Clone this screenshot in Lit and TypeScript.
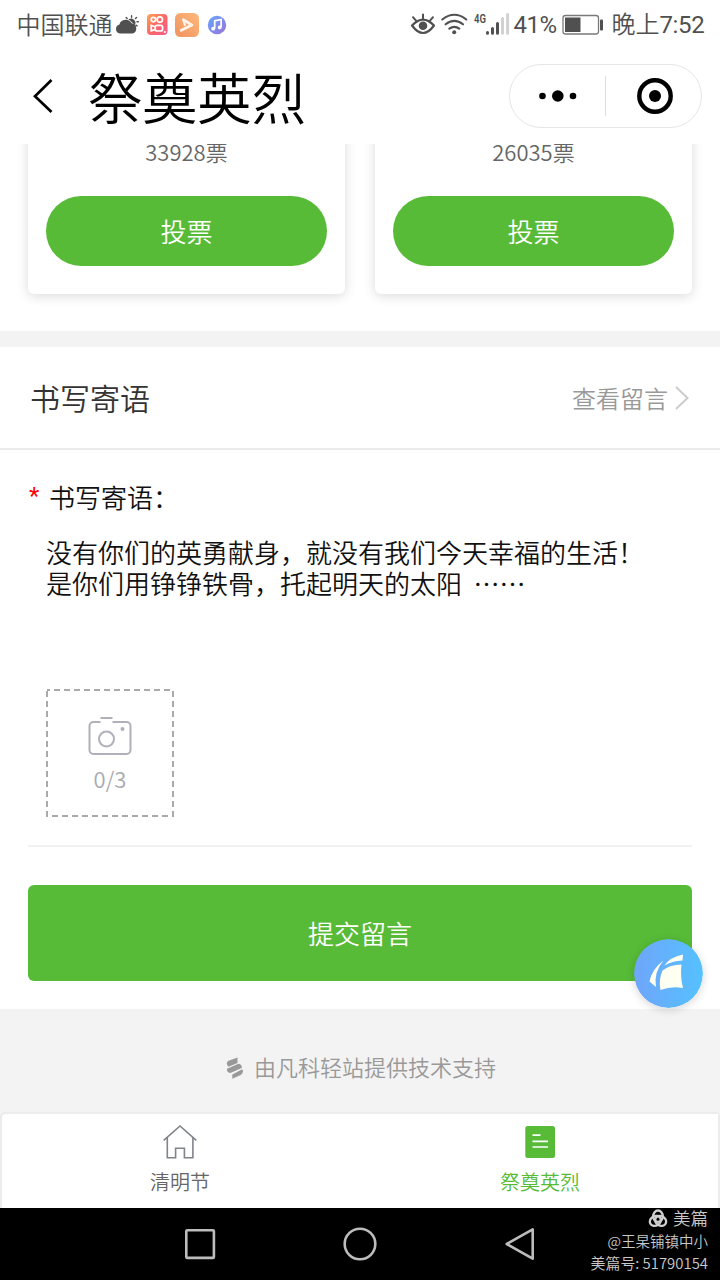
import { LitElement, html, css, svg } from "lit";
import { customElement, property } from "lit/decorators.js";

@customElement("status-bar")
class StatusBar extends LitElement {
  static styles = css`
    :host {
      display: flex;
      height: 48px;
      box-sizing: border-box;
      padding: 0 15.5px 0 16.5px;
      align-items: center;
      font-size: 24px;
      line-height: 48px;
      color: #505050;
    }
    .carrier { width: 95.5px; white-space: nowrap; }
    .spacer { flex: 1; }
    .num { font-family: Roboto, sans-serif; font-weight: 400; letter-spacing: -0.3px; padding-top: 2px; }
    .time { margin-left: 7px; white-space: nowrap; }
    svg { display: block; flex: none; margin-top: 2px; }
    .signal { margin-right: 0.5px; }
    .pct { margin-left: 3px; width: 43px; white-space: nowrap; letter-spacing: -0.4px; }
    .battery { margin-left: 6px; }
  `;
  render() {
    return html`
      <span class="carrier">中国联通</span>
      <svg width="120" height="30" viewBox="112 10 120 30">
        <defs>
          <linearGradient id="k" x1="0" y1="0" x2="1" y2="1">
            <stop offset="0" stop-color="#ffa552" /><stop offset=".5" stop-color="#fa6868" /><stop offset="1" stop-color="#f45a8f" />
          </linearGradient>
          <linearGradient id="v" x1="1" y1="0" x2="0" y2="1">
            <stop offset="0" stop-color="#ffb87c" /><stop offset="1" stop-color="#ee925f" />
          </linearGradient>
          <linearGradient id="m" x1="0" y1="0" x2="1" y2="1">
            <stop offset="0" stop-color="#65a4ff" /><stop offset="1" stop-color="#9a75db" />
          </linearGradient>
        </defs>
        <path d="M120 33.5a4.6 4.6 0 0 1-.6-9 6.6 6.6 0 0 1 12.2-1.3 5.3 5.3 0 0 1 1 10.3z" fill="#505050" />
        <path d="M128.3 19.6a4.3 4.3 0 0 1 6.4 5.6 8 8 0 0 0-2.6-2.6 8 8 0 0 0-3.8-3z" fill="#505050" />
        <path d="M131.6 17.2v-1.4M127.2 18.6l-1.1-1.1M135.4 18.6l1.2-1.2M137 21.8h1.3M136 25.2l1.1.7" stroke="#505050" stroke-width="1.4" stroke-linecap="round" />
        <rect x="147" y="14" width="20.5" height="21" rx="4" fill="url(#k)" />
        <g fill="none" stroke="#fff" stroke-width="1.7">
          <circle cx="153.4" cy="19.6" r="2.2" /><circle cx="159.8" cy="19.6" r="2.7" />
          <rect x="155.2" y="25.4" width="7.4" height="5.6" rx="2" /><path d="M155 26.8l-3.8-1.3v5.4l3.8-1.3" />
        </g>
        <circle cx="164.8" cy="32" r="1" fill="#fff" />
        <rect x="175" y="13" width="24" height="24" rx="5.5" fill="url(#v)" />
        <path d="M183.4 19.8l8.6 5.3-10.7 5.2" fill="none" stroke="#fff4ea" stroke-width="2.8" stroke-linecap="round" stroke-linejoin="round" />
        <path d="M183.6 20.5l1.3 4.5" stroke="#fff4ea" stroke-width="2.2" stroke-linecap="round" />
        <circle cx="217" cy="25" r="9.2" fill="url(#m)" />
        <path d="M214.7 28.6v-7.8l6.4-1.3v7.6" fill="none" stroke="#fff" stroke-width="1.7" />
        <circle cx="213.2" cy="28.7" r="1.9" fill="#fff" /><circle cx="219.7" cy="27.4" r="1.9" fill="#fff" />
      </svg>
      <span class="spacer"></span>
      <svg class="signal" width="100" height="30" viewBox="410 10 100 30" fill="none" stroke="#505050">
        <path d="M412 25.5Q423 13.6 434 25.5Q423 40.5 412 25.5z" stroke-width="2.2" stroke-linejoin="round" />
        <circle cx="423" cy="25.8" r="4.3" fill="#505050" stroke="none" />
        <path d="M423 19v-4.5M416 20.6l-3-3.4M430 20.6l3-3.4" stroke-width="2" stroke-linecap="round" />
        <path d="M442.3 19.5q12-9.5 24 0M445.6 24.3q8.7-7 17.4 0M449.3 28.7q5-3.8 10 0" stroke-width="2.1" stroke-linecap="round" />
        <circle cx="454.2" cy="32.3" r="2" fill="#505050" stroke="none" />
        <text x="474" y="22.5" font-size="13" font-family="Roboto" font-weight="600" textLength="12" lengthAdjust="spacingAndGlyphs" fill="#505050" stroke="none">4G</text>
        <g stroke-width="3" stroke-linecap="round">
          <path d="M487.5 32.6v.6M492.5 28.6v4.6M497.5 23.6v9.6" />
          <path d="M502.5 18.6v14.6M507.6 14.6v18.6" stroke="#d2d2d2" />
        </g>
      </svg>
      <span class="num pct">41%</span>
      <svg class="battery" width="42" height="30" viewBox="563 10 42 30">
        <rect x="564" y="15.5" width="35.5" height="18.5" rx="2.5" fill="#fff" stroke="#7a7a7a" stroke-width="1.3" />
        <rect x="566" y="17.5" width="15.5" height="14.5" fill="#505050" />
        <rect x="601" y="19.5" width="3" height="11" rx="1" fill="#505050" />
      </svg>
      <span class="time">晚上<span class="num">7:52</span></span>
    `;
  }
}

@customElement("nav-header")
class NavHeader extends LitElement {
  @property() heading = "";
  static styles = css`
    :host {
      display: flex;
      height: 96px;
      box-sizing: border-box;
      padding: 0 18px 0 30px;
      align-items: center;
    }
    svg { display: block; }
    .title {
      flex: 1;
      margin-left: 33px;
      font-size: 54.5px;
      line-height: 96px;
      color: #000;
      white-space: nowrap;
    }
    .capsule {
      display: flex;
      box-sizing: border-box;
      width: 193px;
      height: 64px;
      border: 1px solid #e6e6e6;
      border-radius: 32px;
      align-items: center;
    }
    .half { flex: 1; display: flex; justify-content: center; }
    .split { width: 1px; height: 40px; background: #dcdcdc; }
  `;
  render() {
    return html`
      <svg width="25" height="40" viewBox="30 76 25 40">
        <path d="M51.5 80L35 96.3 51.5 112" fill="none" stroke="#000" stroke-width="2.7" />
      </svg>
      <div class="title">${this.heading}</div>
      <div class="capsule">
        <div class="half">
          <svg width="40" height="14">
            <circle cx="4.5" cy="7" r="3.3" /><circle cx="19.8" cy="7" r="5.8" /><circle cx="35" cy="7" r="3.3" />
          </svg>
        </div>
        <div class="split"></div>
        <div class="half">
          <svg width="38" height="38" viewBox="0 0 38 38">
            <circle cx="20" cy="19" r="15.7" fill="none" stroke="#000" stroke-width="4.4" />
            <circle cx="20" cy="19" r="6" />
          </svg>
        </div>
      </div>
    `;
  }
}

@customElement("vote-card")
class VoteCard extends LitElement {
  @property({ type: Number }) votes = 0;
  static styles = css`
    :host {
      display: flex;
      flex-direction: column;
      justify-content: flex-end;
      box-sizing: border-box;
      height: 190px;
      margin-top: -40px;
      padding: 0 18px 28px;
      background: #fff;
      border-radius: 6px;
      box-shadow: 0 2px 12px rgba(0, 0, 0, 0.15);
    }
    .count { text-align: center; font-size: 22px; line-height: 32px; color: #666; margin-bottom: 29px; }
    .vote {
      height: 70px;
      border-radius: 35px;
      background: #57bb37;
      color: #fff;
      font-size: 26px;
      line-height: 69px;
      text-align: center;
    }
  `;
  render() {
    return html`<div class="count">${this.votes}票</div><div class="vote">投票</div>`;
  }
}

@customElement("message-form")
class MessageForm extends LitElement {
  static styles = css`
    :host { display: block; background: #fff; height: 662px; }
    .head {
      display: flex;
      justify-content: space-between;
      align-items: center;
      height: 101px;
      padding: 0 30px;
      border-bottom: 2px solid #ebebeb;
      font-size: 30px;
      color: #333;
    }
    .title { line-height: 44px; padding-bottom: 2px; }
    .more { display: flex; align-items: center; gap: 6px; font-size: 24px; color: #999; }
    svg { display: block; }
    .body { padding: 28px 28px 0; }
    .label { display: flex; font-size: 26px; line-height: 37px; color: #111; }
    .star { width: 20px; padding-left: 1px; color: #f00; font: 24px/36px Roboto, sans-serif; height: 36px; }
    .text {
      margin: 21px 0 0 18px;
      height: 153px;
      font-size: 26px;
      line-height: 31px;
      color: #111;
      white-space: pre;
    }
    .upload { display: grid; width: 128px; height: 128px; margin-left: 18px; }
    .upload > * { grid-area: 1 / 1; }
    .inner { display: flex; flex-direction: column; align-items: center; padding-top: 27px; color: #a9a9b0; font-size: 22px; line-height: 32px; }
    .inner svg { margin-bottom: 5px; }
    .rule { height: 2px; margin-top: 28px; background: #f1f1f1; }
    .submit {
      height: 96px;
      margin-top: 38px;
      border-radius: 6px;
      background: #57bb37;
      color: #fff;
      font-size: 26px;
      line-height: 95px;
      text-align: center;
    }
  `;
  render() {
    return html`
      <div class="head">
        <span class="title">书写寄语</span>
        <span class="more">查看留言
          <svg width="16" height="26" viewBox="0 0 16 26"><path d="M2 2l11.5 11L2 24" fill="none" stroke="#ccc" stroke-width="2" /></svg>
        </span>
      </div>
      <div class="body">
        <div class="label"><span class="star">*</span><span>书写寄语：</span></div>
        <div class="text">没有你们的英勇献身，就没有我们今天幸福的生活！
是你们用铮铮铁骨，托起明天的太阳  ……</div>
        <div class="upload">
          <svg width="128" height="128">
            <rect x="1" y="1" width="126" height="126" fill="none" stroke="#aaa" stroke-width="2" stroke-dasharray="6 4" stroke-dashoffset="3" />
          </svg>
          <div class="inner">
            <svg width="44" height="41" viewBox="0.5 0 44 41" fill="none" stroke="#b0b0ba" stroke-width="2">
              <path d="M13 6H6a4 4 0 0 0-4 4v24a4 4 0 0 0 4 4h33a4 4 0 0 0 4-4V10a4 4 0 0 0-4-4H25M13 2h12" />
              <circle cx="19" cy="23" r="7.5" />
              <circle cx="35" cy="13" r="2" fill="#b0b0ba" stroke="none" />
            </svg>
            <span>0/3</span>
          </div>
        </div>
        <div class="rule"></div>
        <div class="submit">提交留言</div>
      </div>
    `;
  }
}

@customElement("tab-bar")
class TabBar extends LitElement {
  static styles = css`
    :host {
      display: flex;
      height: 96px;
      box-sizing: border-box;
      background: #fff;
      box-shadow: inset 2px 2px #ececec, inset -2px 0 #ececec;
      border-radius: 4px 4px 0 0;
    }
    .tab {
      flex: 1;
      display: flex;
      flex-direction: column;
      align-items: center;
      padding-top: 12px;
      font-size: 20px;
      line-height: 28px;
      color: #666;
    }
    .active { color: #57bb37; }
    svg { display: block; margin-bottom: 8px; }
  `;
  render() {
    return html`
      <div class="tab">
        <svg width="36" height="36" viewBox="162 1124 36 36" fill="none" stroke="#808489" stroke-width="1.6">
          <path d="M163.7 1140.3L180 1126l16.3 14.3M167.3 1137.5v20.3h8.3v-9.5h8.8v9.5h8.5v-20.3" />
        </svg>
        <span>清明节</span>
      </div>
      <div class="tab active">
        <svg width="36" height="36" viewBox="522 1124 36 36">
          <rect x="525.3" y="1126" width="29.7" height="32" rx="2.5" fill="#57bb37" />
          <path d="M532.5 1135.2h8M532.5 1141.3h15.500M532.5 1147h15.500" stroke="#fff" stroke-width="1.7" />
        </svg>
        <span>祭奠英烈</span>
      </div>
    `;
  }
}

@customElement("system-bar")
class SystemBar extends LitElement {
  static styles = css`
    :host { display: flex; justify-content: space-between; height: 72px; background: #000; overflow: hidden; }
    svg { display: block; }
    .keys { margin-left: 180px; flex: none; }
    .mark { width: 130px; padding-right: 12px; text-align: right; color: #c9c9c9; font-size: 14.5px; line-height: 22px; white-space: nowrap; }
    .brand { display: flex; justify-content: flex-end; align-items: center; gap: 5px; height: 22px; font-size: 17.5px; line-height: 20px; }
    .brand span { padding-bottom: 2px; }
    .brand svg { margin-bottom: 1px; }
    .id { font-size: 14.9px; }
  `;
  render() {
    const ring = (a: number) => svg`<ellipse cx="10" cy="7.2" rx="4.8" ry="5.7" transform="rotate(${a} 10 10.3)" />`;
    return html`
      <svg class="keys" width="360" height="72" viewBox="180 1208 360 72" fill="none" stroke="#bcbcbc" stroke-width="2.6" stroke-linejoin="round">
        <rect x="186.3" y="1230.3" width="27.6" height="27.6" rx="1" />
        <circle cx="360" cy="1244" r="15.3" />
        <path d="M506.7 1244l26-14.7v29.4z" />
      </svg>
      <div class="mark">
        <div class="brand">
          <svg width="20" height="20" viewBox="0 0 20 20" fill="none" stroke="#d0d0d0" stroke-width="2.3">${ring(0)}${ring(120)}${ring(240)}</svg>
          <span>美篇</span>
        </div>
        <div>@王杲铺镇中小</div>
        <div class="id">美篇号: 51790154</div>
      </div>
    `;
  }
}

@customElement("app-root")
class AppRoot extends LitElement {
  static styles = css`
    :host {
      display: block;
      position: relative;
      width: 720px;
      height: 1280px;
      overflow: hidden;
      background: #fff;
      font-family: "Noto Sans CJK SC DemiLight", "Noto Sans CJK SC", sans-serif;
      font-weight: 350;
    }
    .cards {
      display: grid;
      grid-template-columns: 1fr 1fr;
      gap: 30px;
      height: 187px;
      box-sizing: border-box;
      padding: 0 28px;
      overflow: hidden;
    }
    .band { height: 16px; background: #f3f3f3; }
    .support {
      display: flex;
      justify-content: center;
      align-items: center;
      gap: 10px;
      height: 103px;
      background: #f3f3f3;
      color: #999;
      font-size: 22px;
    }
    .under { background: #f3f3f3; }
    .support svg { display: block; margin-top: 14px; }
    .support span { margin-top: 11px; }
    .float { position: absolute; left: 633.5px; top: 939px; border-radius: 50%; box-shadow: 0 2px 8px rgba(0, 0, 0, 0.16); display: block; }
  `;
  render() {
    return html`
      <status-bar></status-bar>
      <nav-header heading="祭奠英烈"></nav-header>
      <div class="cards">
        <vote-card .votes=${33928}></vote-card>
        <vote-card .votes=${26035}></vote-card>
      </div>
      <div class="band"></div>
      <message-form></message-form>
      <div class="support">
        <svg width="20" height="22" viewBox="224 1056 20 22" fill="#999">
          <path d="M237.5 1056.5v5.5l-9 3.7q-3.5-3.8 0-6z" />
          <path d="M227 1067.8l11.4-5q4 .7 3.3 4.2l-11.4 5q-4-.7-3.3-4.2z" />
          <path d="M232.3 1077.7v-4.3l10-5.2q1.8 3.5-1.5 5.7z" />
        </svg>
        <span>由凡科轻站提供技术支持</span>
      </div>
      <div class="under"><tab-bar></tab-bar></div>
      <system-bar></system-bar>
      <svg class="float" width="69" height="69" viewBox="0 0 69 69">
        <defs><linearGradient id="f"><stop offset="0" stop-color="#6fa5fa" /><stop offset="1" stop-color="#55c1ff" /></linearGradient></defs>
        <circle cx="34.5" cy="34.5" r="34.5" fill="url(#f)" />
        <path d="M29.5 21.5Q18 30 15.5 42.5L22 48Q19.5 33 29.5 21.5zM30.5 26.5Q36 18 49 15.5L48.5 21.5Q38 22 30.5 26.5zM28.5 31.5Q36 25.5 47.5 25.5Q46 37 49 49Q37 47 26.5 51Q24.5 40 28.5 31.5z" fill="#fffff2" />
      </svg>
    `;
  }
}
